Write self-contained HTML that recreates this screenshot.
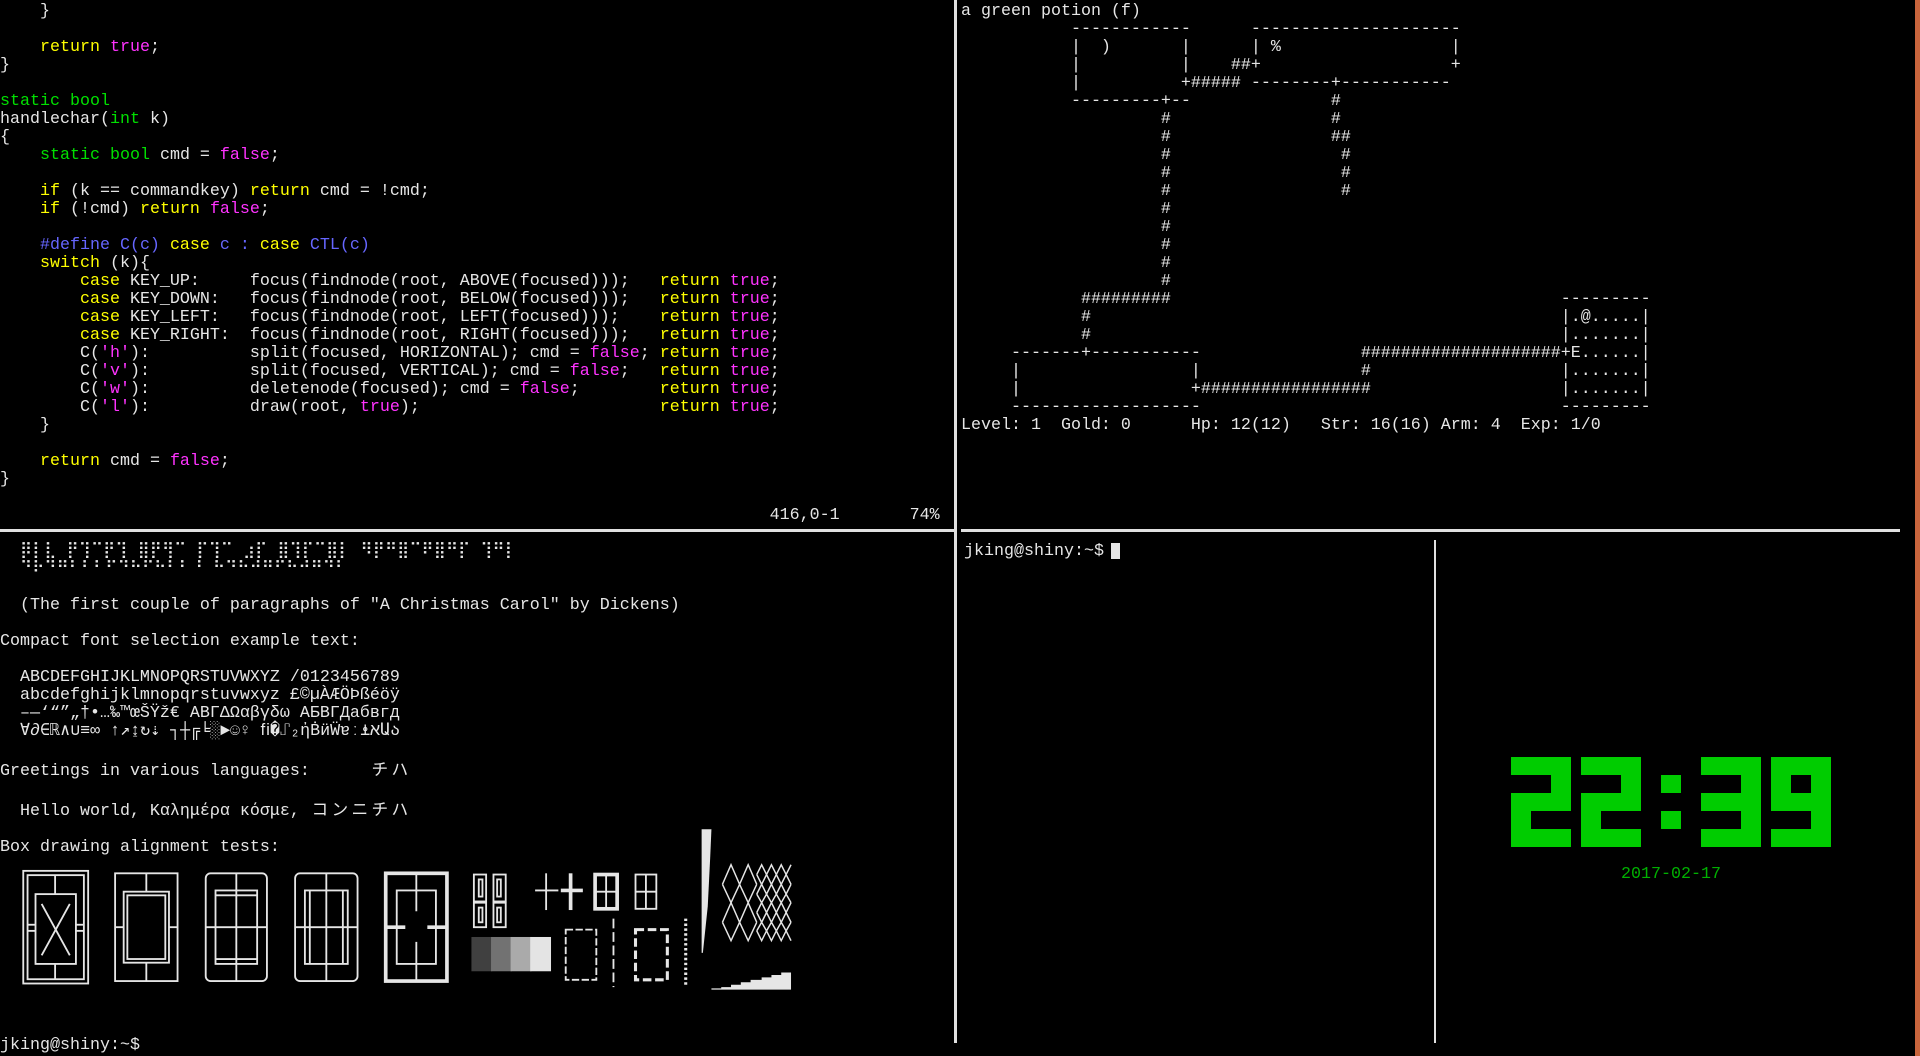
<!DOCTYPE html>
<html><head><meta charset="utf-8">
<style>
html,body{margin:0;padding:0;background:#000;width:1920px;height:1056px;overflow:hidden;position:relative}
pre{position:absolute;margin:0;font-family:"Liberation Mono","DejaVu Sans Mono","Noto Sans CJK JP",monospace;font-size:16.6667px;line-height:18px;color:#e6e6e6;white-space:pre}
.y{color:#ffff00}.m{color:#ff33ff}.g{color:#00e000}.b{color:#6666ff}
.cjk{display:inline-block;width:20px;text-align:center;font-family:"Noto Sans CJK JP",sans-serif}
.ln{position:absolute;background:#e0e0e0}
.blk{position:absolute;background:#00cc00;width:20px;height:18px}
</style></head><body>

<pre style="left:0;top:3px">    }

    <span class="y">return</span> <span class="m">true</span>;
}

<span class="g">static</span> <span class="g">bool</span>
handlechar(<span class="g">int</span> k)
{
    <span class="g">static</span> <span class="g">bool</span> cmd = <span class="m">false</span>;

    <span class="y">if</span> (k == commandkey) <span class="y">return</span> cmd = !cmd;
    <span class="y">if</span> (!cmd) <span class="y">return</span> <span class="m">false</span>;

    <span class="b">#define C(c)</span> <span class="y">case</span> <span class="b">c :</span> <span class="y">case</span> <span class="b">CTL(c)</span>
    <span class="y">switch</span> (k){
        <span class="y">case</span> KEY_UP:     focus(findnode(root, ABOVE(focused)));   <span class="y">return</span> <span class="m">true</span>;
        <span class="y">case</span> KEY_DOWN:   focus(findnode(root, BELOW(focused)));   <span class="y">return</span> <span class="m">true</span>;
        <span class="y">case</span> KEY_LEFT:   focus(findnode(root, LEFT(focused)));    <span class="y">return</span> <span class="m">true</span>;
        <span class="y">case</span> KEY_RIGHT:  focus(findnode(root, RIGHT(focused)));   <span class="y">return</span> <span class="m">true</span>;
        C(<span class="m">'h'</span>):          split(focused, HORIZONTAL); cmd = <span class="m">false</span>; <span class="y">return</span> <span class="m">true</span>;
        C(<span class="m">'v'</span>):          split(focused, VERTICAL); cmd = <span class="m">false</span>;   <span class="y">return</span> <span class="m">true</span>;
        C(<span class="m">'w'</span>):          deletenode(focused); cmd = <span class="m">false</span>;        <span class="y">return</span> <span class="m">true</span>;
        C(<span class="m">'l'</span>):          draw(root, <span class="m">true</span>);                        <span class="y">return</span> <span class="m">true</span>;
    }

    <span class="y">return</span> cmd = <span class="m">false</span>;
}

                                                                             416,0-1       74%</pre>

<pre style="left:961px;top:3px">a green potion (f)
           ------------      ---------------------
           |  )       |      | %                 |
           |          |    ##+                   +
           |          +##### --------+-----------
           ---------+--              #
                    #                #
                    #                ##
                    #                 #
                    #                 #
                    #                 #
                    #
                    #
                    #
                    #
                    #
            #########                                       ---------
            #                                               |.@.....|
            #                                               |.......|
     -------+-----------                ####################+E......|
     |                 |                #                   |.......|
     |                 +#################                   |.......|
     -------------------                                    ---------
Level: 1  Gold: 0      Hp: 12(12)   Str: 16(16) Arm: 4  Exp: 1/0</pre>

<pre style="left:0;top:543px">  ⡿⡇⣇ ⡟⢹⠉⡟⢹ ⣿⡟⢻⠉ ⡏⢹⠉ ⣰⡏ ⣿⢹⡏⠉⣿⡇ ⠻⡟⠛⣿⠉⠟⣿⠛⡏ ⢹⠛⡇
  ⠙⠗⠙⠛⠃⠃⠃⠋⠙⠓⠋⠓⠃⠃⠘ ⠓⠙⠓⠚⠛⠋⠓⠚⠛⠙⠃

  (The first couple of paragraphs of "A Christmas Carol" by Dickens)

Compact font selection example text:

  ABCDEFGHIJKLMNOPQRSTUVWXYZ /0123456789
  abcdefghijklmnopqrstuvwxyz £©µÀÆÖÞßéöÿ
  –—‘“”„†•…‰™œŠŸž€ ΑΒΓΔΩαβγδω АБВГДабвгд
  ∀∂∈ℝ∧∪≡∞ ↑↗↨↻⇣ ┐┼╔╘░►☺♀ ﬁ�⑀₂ἠḂӥẄɐː⍎אԱა

Greetings in various languages:      <span class="cjk">チ</span><span class="cjk">ハ</span>

  Hello world, Καλημέρα κόσμε, <span class="cjk">コ</span><span class="cjk">ン</span><span class="cjk">ニ</span><span class="cjk">チ</span><span class="cjk">ハ</span>

Box drawing alignment tests:










jking@shiny:~$</pre>

<pre style="left:964px;top:543px">jking@shiny:~$ </pre>
<div style="position:absolute;left:1111px;top:543px;width:9px;height:16px;background:#e6e6e6"></div>

<div class="ln" style="left:0;top:529px;width:955px;height:3px"></div>
<div class="ln" style="left:954px;top:0;width:3px;height:1043px"></div>
<div class="ln" style="left:961px;top:529px;width:939px;height:3px"></div>
<div class="ln" style="left:1434px;top:540px;width:2px;height:503px"></div>
<div style="position:absolute;left:1915px;top:0;width:5px;height:1056px;background:#c8643c"></div>

<div style="position:absolute;left:1511px;top:757px">
  <div class="blk" style="left:0;top:0;width:60px"></div>
  <div class="blk" style="left:40px;top:18px"></div>
  <div class="blk" style="left:0;top:36px;width:60px"></div>
  <div class="blk" style="left:0;top:54px"></div>
  <div class="blk" style="left:0;top:72px;width:60px"></div>
  <div class="blk" style="left:70px;top:0;width:60px"></div>
  <div class="blk" style="left:110px;top:18px"></div>
  <div class="blk" style="left:70px;top:36px;width:60px"></div>
  <div class="blk" style="left:70px;top:54px"></div>
  <div class="blk" style="left:70px;top:72px;width:60px"></div>
  <div class="blk" style="left:150px;top:18px"></div>
  <div class="blk" style="left:150px;top:54px"></div>
  <div class="blk" style="left:190px;top:0;width:60px"></div>
  <div class="blk" style="left:230px;top:18px"></div>
  <div class="blk" style="left:190px;top:36px;width:60px"></div>
  <div class="blk" style="left:230px;top:54px"></div>
  <div class="blk" style="left:190px;top:72px;width:60px"></div>
  <div class="blk" style="left:260px;top:0;width:60px"></div>
  <div class="blk" style="left:260px;top:18px"></div>
  <div class="blk" style="left:300px;top:18px"></div>
  <div class="blk" style="left:260px;top:36px;width:60px"></div>
  <div class="blk" style="left:300px;top:54px"></div>
  <div class="blk" style="left:260px;top:72px;width:60px"></div>
</div>
<pre style="left:1621px;top:866px;color:#00b000">2017-02-17</pre>

<svg style="position:absolute;left:0;top:0" width="1920" height="1056" viewBox="0 0 1568 862" fill="none" stroke="#e6e6e6" stroke-width="1.5">
  <rect x="19" y="711" width="53" height="92"/>
  <rect x="22.5" y="714.5" width="46" height="85"/>
  <rect x="29" y="730" width="33" height="57"/>
  <line x1="45" y1="714" x2="45" y2="730"/><line x1="45" y1="787" x2="45" y2="800"/>
  <line x1="22" y1="755" x2="29" y2="755"/><line x1="22" y1="760" x2="29" y2="760"/>
  <line x1="62" y1="755" x2="69" y2="755"/><line x1="62" y1="760" x2="69" y2="760"/>
  <line x1="34" y1="738" x2="57" y2="780"/><line x1="57" y1="738" x2="34" y2="780"/>
  <rect x="94" y="713" width="51" height="88"/>
  <rect x="101" y="728" width="37" height="58"/>
  <rect x="104" y="731" width="31" height="52"/>
  <line x1="119.5" y1="713" x2="119.5" y2="728"/><line x1="119.5" y1="786" x2="119.5" y2="801"/>
  <line x1="94" y1="757" x2="101" y2="757"/><line x1="138" y1="757" x2="145" y2="757"/>
  <rect x="168" y="713" width="50" height="88" rx="4"/>
  <line x1="193" y1="713" x2="193" y2="801"/>
  <line x1="168" y1="757" x2="218" y2="757"/>
  <rect x="176" y="727" width="34" height="60"/>
  <line x1="176" y1="731" x2="210" y2="731"/><line x1="176" y1="783" x2="210" y2="783"/>
  <rect x="241" y="713" width="51" height="88" rx="4"/>
  <line x1="266.5" y1="713" x2="266.5" y2="801"/>
  <line x1="241" y1="757" x2="292" y2="757"/>
  <rect x="249" y="727" width="35" height="60"/>
  <line x1="253" y1="727" x2="253" y2="787"/><line x1="280" y1="727" x2="280" y2="787"/>
  <rect x="315" y="713" width="50" height="88" stroke-width="3"/>
  <rect x="324" y="727" width="32" height="60"/>
  <line x1="340" y1="713" x2="340" y2="744"/><line x1="340" y1="769" x2="340" y2="801"/>
  <line x1="315" y1="757" x2="331" y2="757" stroke-width="3"/><line x1="349" y1="757" x2="365" y2="757" stroke-width="3"/>
  <rect x="387" y="714" width="10" height="22"/><rect x="391" y="718" width="3" height="14"/>
  <rect x="403" y="714" width="10" height="22"/><rect x="406" y="718" width="3" height="14"/>
  <rect x="387" y="737" width="10" height="20"/><rect x="391" y="741" width="3" height="12"/>
  <rect x="403" y="737" width="10" height="20"/><rect x="406" y="741" width="3" height="12"/>
  <line x1="446" y1="713" x2="446" y2="743"/><line x1="437" y1="727" x2="456" y2="727"/>
  <line x1="466" y1="713" x2="466" y2="743" stroke-width="3"/><line x1="458" y1="727" x2="476" y2="727" stroke-width="3"/>
  <rect x="486" y="714" width="18" height="28" stroke-width="3"/><line x1="495" y1="714" x2="495" y2="742"/><line x1="486" y1="728" x2="504" y2="728"/>
  <rect x="519" y="714" width="17" height="28"/><line x1="527.5" y1="714" x2="527.5" y2="742"/><line x1="519" y1="728" x2="536" y2="728"/>
  <rect x="462" y="759" width="25" height="41" stroke-dasharray="6 2"/>
  <line x1="501" y1="750" x2="501" y2="806" stroke-dasharray="8 3"/>
  <rect x="519" y="759" width="26" height="41" stroke-width="2.5" stroke-dasharray="7 3"/>
  <line x1="560" y1="750" x2="560" y2="806" stroke-width="2.5" stroke-dasharray="2 2"/>
  <g stroke-width="1.2">
    <polyline points="590,722 597,706 604,722 611,706 618,722"/>
    <polyline points="590,722 597,737 604,722 611,737 618,722"/>
    <polyline points="590,753 597,737 604,753 611,737 618,753"/>
    <polyline points="590,753 597,768 604,753 611,768 618,753"/>
    <polyline points="618,714 622,706 626,714 630,706 634,714 638,706 642,714 646,706"/>
    <polyline points="618,714 622,722 626,714 630,722 634,714 638,722 642,714 646,722"/>
    <polyline points="618,730 622,722 626,730 630,722 634,730 638,722 642,730 646,722"/>
    <polyline points="618,730 622,737 626,730 630,737 634,730 638,737 642,730 646,737"/>
    <polyline points="618,745 622,737 626,745 630,737 634,745 638,737 642,745 646,737"/>
    <polyline points="618,745 622,753 626,745 630,753 634,745 638,753 642,745 646,753"/>
    <polyline points="618,760 622,753 626,760 630,753 634,760 638,753 642,760 646,753"/>
    <polyline points="618,760 622,768 626,760 630,768 634,760 638,768 642,760 646,768"/>
  </g>
</svg>
<svg style="position:absolute;left:0;top:0" width="1920" height="1056" viewBox="0 0 1568 862">
  <rect x="385" y="765" width="17" height="28" fill="#404040"/>
  <rect x="401" y="765" width="17" height="28" fill="#727272"/>
  <rect x="417" y="765" width="17" height="28" fill="#aaaaaa"/>
  <rect x="433" y="765" width="17" height="28" fill="#e4e4e4"/>
  <polygon points="573,677 581,677 580,700 578,740 574,778 573,778" fill="#e6e6e6"/>
  <polygon points="581,808 646,808 646,794 638,794 638,796 630,796 630,798 622,798 622,800 613,800 613,802 605,802 605,804 597,804 597,806 589,806 589,807 581,807" fill="#e6e6e6"/>
</svg>
</body></html>
